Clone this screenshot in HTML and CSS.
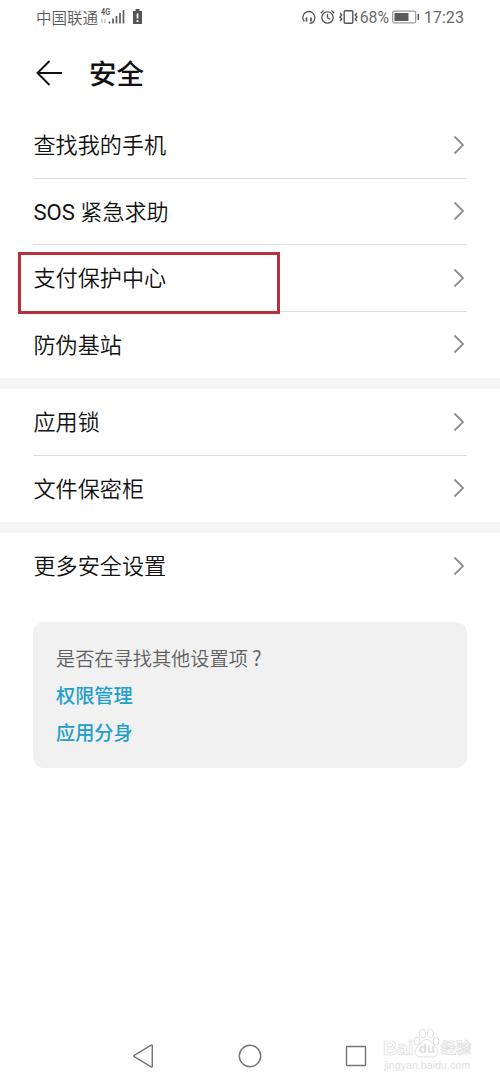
FILE: index.html
```html
<!DOCTYPE html>
<html lang="zh-CN">
<head>
<meta charset="utf-8">
<title>安全</title>
<link rel="stylesheet" href="styles.css">
</head>
<body>
<div class="screen">
  <div class="status">
    <div class="status-left">
      <span class="carrier">中国联通</span>
      <span class="network"><span class="gen">4G</span>
        <svg class="signal" width="25" height="17" viewBox="0 0 25 17"><path d="M2 10v4M1 11l1-1M5 10v4M4 13l1 1" stroke="#b5b5b5" fill="none"/><path d="M9.500 12.500v2M13 9.500v5M16.500 7v7.500M20 4v10.500M23.500 1v13.500" stroke="#606060" stroke-width="1.700"/></svg>
      </span>
      <svg class="alert" width="9" height="16" viewBox="0 0 9 16"><path d="M2.500 0h4v2H9v13H0V2h2.500z" fill="#555"/><path d="M4.500 4.500v5M4.500 11v2" stroke="#fff" stroke-width="1.700"/></svg>
    </div>
    <div class="status-right">
      <svg class="headset" width="15" height="16" viewBox="0 0 15 16" fill="none" stroke="#555" stroke-width="1.300"><path d="M3.300 12.500A6 6 0 1 1 13.800 8.500c0 3.300-1.800 5.600-5.300 6"/><path d="M5.500 8.500v4M10 8.500v4" stroke-width="1.700"/></svg>
      <svg class="alarm" width="15" height="16" viewBox="0 0 15 16" fill="none" stroke="#555" stroke-width="1.300"><circle cx="7.500" cy="8.500" r="5.700"/><path d="M7.500 5v3.700l2.700 1.500M.8 4.200 3.500 1.500M11.500 1.500l2.700 2.700"/></svg>
      <svg class="vibrate" width="19" height="16" viewBox="0 0 19 16" fill="none" stroke="#555" stroke-width="1.400"><rect x="5.200" y="1.700" width="8.600" height="12.600" rx="1"/><path d="M1 4l1.800 2L1 8l1.800 2L1 12M18 4l-1.800 2L18 8l-1.800 2 1.800 2"/></svg>
      <span class="percent">68%</span>
      <svg class="battery" width="28" height="14" viewBox="0 0 28 14"><rect x=".7" y="1.200" width="23" height="11.600" rx="1.500" fill="#fff" stroke="#999" stroke-width="1.200"/><path d="M2.500 3h14v8h-14z" fill="#5b5b5b"/><path d="M26.300 4v6" stroke="#555" stroke-width="1.500"/></svg>
      <span class="clock">17:23</span>
    </div>
  </div>
  <div class="header">
    <svg class="back" width="26" height="26" viewBox="0 0 26 26" fill="none" stroke="#111" stroke-width="1.900"><path d="M26 13H1.500M13.500 1 1.500 13l12 12"/></svg>
    <h1 class="title">安全</h1>
  </div>
  <div class="group">
    <div class="row"><span class="label">查找我的手机</span><svg class="chevron" viewBox="0 0 12 20"><path d="M1.500 1.500 10 10l-8.500 8.500"/></svg></div>
    <div class="row"><span class="label"><span class="latin">SOS</span> 紧急求助</span><svg class="chevron" viewBox="0 0 12 20"><path d="M1.500 1.500 10 10l-8.500 8.500"/></svg></div>
    <div class="row"><span class="label">支付保护中心</span><svg class="chevron" viewBox="0 0 12 20"><path d="M1.500 1.500 10 10l-8.500 8.500"/></svg><div class="highlight"></div></div>
    <div class="row"><span class="label">防伪基站</span><svg class="chevron" viewBox="0 0 12 20"><path d="M1.500 1.500 10 10l-8.500 8.500"/></svg></div>
  </div>
  <div class="band"></div>
  <div class="group">
    <div class="row"><span class="label">应用锁</span><svg class="chevron" viewBox="0 0 12 20"><path d="M1.500 1.500 10 10l-8.500 8.500"/></svg></div>
    <div class="row"><span class="label">文件保密柜</span><svg class="chevron" viewBox="0 0 12 20"><path d="M1.500 1.500 10 10l-8.500 8.500"/></svg></div>
  </div>
  <div class="band"></div>
  <div class="group">
    <div class="row"><span class="label">更多安全设置</span><svg class="chevron" viewBox="0 0 12 20"><path d="M1.500 1.500 10 10l-8.500 8.500"/></svg></div>
  </div>
  <div class="card">
    <div class="question">是否在寻找其他设置项<span class="mark">?</span></div>
    <div class="link">权限管理</div>
    <div class="link">应用分身</div>
  </div>
  <div class="nav">
    <svg width="24" height="26" viewBox="0 0 24 26"><path d="M20.300 2.800v20.400c0 .8-.6 1-1.200.6L2.200 13.700c-.6-.4-.6-1 0-1.400L19.100 2.200c.6-.4 1.200-.2 1.200.6z"/></svg>
    <svg width="24" height="26" viewBox="0 0 24 26"><circle cx="12" cy="13" r="10.700"/></svg>
    <svg width="24" height="26" viewBox="0 0 24 26"><rect x="2.500" y="3.500" width="19" height="19" rx=".7"/></svg>
  </div>
  <div class="watermark">
    <div class="brand">
      <span class="brand-name">Bai</span>
      <span class="paw"><svg width="27" height="30" viewBox="0 0 27 30" fill="#fff" stroke="#dedede"><ellipse cx="4" cy="13" rx="3" ry="4"/><ellipse cx="9.500" cy="5.500" rx="3" ry="4.300"/><ellipse cx="17.500" cy="5.500" rx="3" ry="4.300"/><ellipse cx="23" cy="13" rx="3" ry="4"/><path d="M13.500 11.500c4 0 5 4 9 7.500 4.500 4 2.500 10-3 10-3 0-9-.5-12 0-5.500 0-7.500-6-3-10 4-3.500 5-7.500 9-7.500z"/></svg><span class="du">du</span></span>
      <span class="brand-cn">经验</span>
    </div>
    <div class="site">jingyan.baidu.com</div>
  </div>
</div>
</body>
</html>
```
FILE: styles.css
```css
body {
  margin: 0;
  background: #fff;
  color: #111;
  font-family: "Noto Sans CJK SC", "Liberation Sans", sans-serif;
}
.screen {
  position: relative;
  display: flex;
  flex-direction: column;
  width: 500px;
  height: 1083px;
  overflow: hidden;
  background: #fff;
}
.status {
  display: flex;
  justify-content: space-between;
  height: 34px;
  padding: 0 36px;
  box-sizing: border-box;
  color: #5c5c5c;
}
.status-left, .status-right { display: flex; align-items: center; }
.carrier { font-size: 15.500px; font-weight: 350; line-height: 33px; }
.network { position: relative; display: flex; padding-left: 2px; }
.gen {
  position: absolute;
  left: 3px;
  top: -1px;
  font: bold 8.500px/9px Roboto, sans-serif;
  transform: scaleX(.85);
  transform-origin: left;
}
.alert { margin-left: 8px; }
.headset { margin-right: 4px; }
.alarm { margin-right: 4px; }
.vibrate { margin-right: 2px; }
.percent, .clock { font: 400 16.200px/34px Roboto, sans-serif; padding-top: 1px; color: #6a6a6a; }
.percent { width: 32px; font-size: 15.800px; }
.clock { margin-left: 4px; }
.header {
  display: flex;
  align-items: center;
  height: 78px;
  padding-left: 36px;
}
.title { margin: -2px 0 0 27px; font-size: 27.500px; font-weight: 500; line-height: 40px; }
.row {
  position: relative;
  display: flex;
  align-items: center;
  justify-content: space-between;
  height: 66.500px;
  margin: 0 33px;
  padding-right: 2.500px;
  box-sizing: border-box;
  border-bottom: 1px solid #dedede;
}
.row:last-child { border-bottom-color: transparent; }
.label {
  padding: 1px 0 0 .5px;
  font: 350 22.100px/32px Roboto, "Noto Sans CJK SC", sans-serif;
}
.latin { font-weight: 400; }
.chevron { width: 12px; height: 20px; fill: none; stroke: #8e8e8e; stroke-width: 1.800; }
.highlight {
  position: absolute;
  left: -15px;
  top: 7px;
  width: 256px;
  height: 56px;
  border: 3px solid #b8303e;
}
.band { height: 11px; background: #f5f5f5; }
.card {
  height: 146px;
  margin: 22.500px 33px 0;
  padding: 18px 23px;
  box-sizing: border-box;
  border-radius: 11px;
  background: #f1f1f1;
  font-size: 19.200px;
  line-height: 37.500px;
}
.question { height: 36.500px; color: #606060; font-weight: 350; }
.mark { padding-left: 4px; font-size: 20.500px; line-height: 1; }
.link { color: #22a0cb; font-weight: 500; }
.nav {
  display: flex;
  justify-content: space-between;
  margin-top: auto;
  padding: 0 132px 14px;
}
.nav svg { fill: none; stroke: #777; stroke-width: 1.500; }
.watermark {
  position: absolute;
  left: 383px;
  top: 1028px;
  width: 92px;
  font-family: "Liberation Sans", "Noto Sans CJK SC", sans-serif;
  color: #fff;
}
.brand { display: flex; align-items: flex-end; height: 31px; -webkit-text-stroke: .7px #dcdcdc; }
.brand-name { width: 30px; font-size: 19.500px; font-weight: bold; line-height: 21px; }
.paw { position: relative; width: 27px; height: 30px; margin-bottom: 1px; }
.du { position: absolute; left: 6px; bottom: 2px; font-size: 13px; font-weight: bold; line-height: 14px; color: #dedede; -webkit-text-stroke: 0; }
.brand-cn { margin-left: 1px; font-size: 15px; font-weight: bold; line-height: 22px; }
.site { padding-left: 1px; font-size: 10.700px; line-height: 12px; color: #e2e2e2; }
```
